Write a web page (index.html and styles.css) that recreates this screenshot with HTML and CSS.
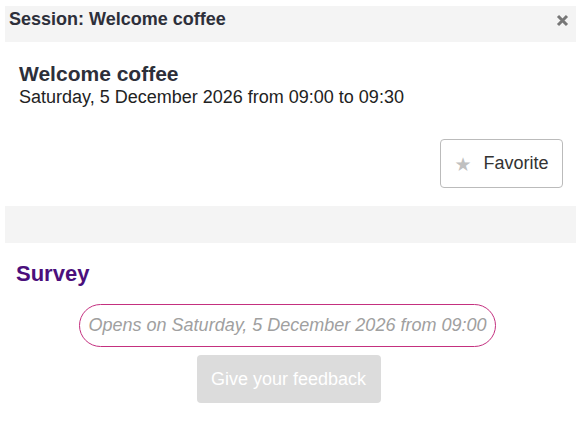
FILE: index.html
```html
<!DOCTYPE html>
<html>
<head>
<meta charset="utf-8">
<link rel="stylesheet" href="styles.css">
</head>
<body>
<div class="dialog">
  <div class="dialog-header">
    <span class="dialog-title">Session: Welcome coffee</span>
    <svg class="close" width="13" height="13" viewBox="0 0 13 13" aria-label="close"><path d="M2 2 L11 11 M11 2 L2 11" stroke="#777" stroke-width="3" stroke-linecap="butt"/></svg>
  </div>
  <div class="session">
    <div class="session-name">Welcome coffee</div>
    <div class="session-time">Saturday, 5 December 2026 from 09:00 to 09:30</div>
  </div>
  <div class="actions">
    <button class="fav-btn"><span class="star">&#9733;</span>Favorite</button>
  </div>
  <div class="band"></div>
  <h2 class="survey-title">Survey</h2>
  <div class="survey">
    <div class="pill">Opens on Saturday, 5 December 2026 from 09:00</div>
    <button class="feedback-btn" disabled>Give your feedback</button>
  </div>
</div>
</body>
</html>
```
FILE: styles.css
```css
html, body {
  margin: 0;
  padding: 0;
  background: #fff;
}
body {
  font-family: "Liberation Sans", Arial, sans-serif;
  color: #333;
}
.dialog {
  padding: 6px 3px 0 5px;
}
.dialog-header {
  background: #f4f4f4;
  height: 36px;
  display: flex;
  justify-content: space-between;
  align-items: flex-start;
  padding: 0 7px 0 4px;
}
.dialog-title {
  font-weight: bold;
  font-size: 18px;
  line-height: 27px;
  color: #2d2f3a;
}
.close {
  margin-top: 8px;
}
.session {
  padding: 20px 14px 0 14px;
}
.session-name {
  font-weight: bold;
  font-size: 21px;
  line-height: 24px;
  color: #2d2f3a;
}
.session-time {
  font-size: 18px;
  line-height: 22px;
  color: #222;
}
.actions {
  display: flex;
  justify-content: flex-end;
  padding: 31px 13px 18px 0;
}
.fav-btn {
  height: 49px;
  width: 123px;
  background: #fff;
  border: 1px solid #bbb;
  border-radius: 4px;
  font-family: "Liberation Sans", Arial, sans-serif;
  font-size: 18px;
  color: #333;
  display: flex;
  align-items: center;
  justify-content: center;
  gap: 12px;
  padding: 0;
}
.star {
  color: #c0c0c0;
  font-size: 19px;
  font-family: "DejaVu Sans", sans-serif;
}
.band {
  background: #f4f4f4;
  height: 37px;
}
.survey-title {
  margin: 0;
  padding: 18px 0 0 11px;
  font-size: 22px;
  line-height: 25px;
  color: #4b0f7c;
  font-weight: bold;
}
.survey {
  display: flex;
  flex-direction: column;
  align-items: center;
  padding: 18px 4px 0 0;
}
.pill {
  border: 1.5px solid #c4307f;
  border-radius: 22px;
  padding: 0 9px;
  height: 41px;
  line-height: 41px;
  font-style: italic;
  font-size: 18px;
  color: #a0a0a0;
  margin-right: 2px;
}
.feedback-btn {
  margin-top: 8px;
  height: 48px;
  width: 184px;
  background: #dcdcdc;
  border: none;
  border-radius: 4px;
  color: #fff;
  font-family: "Liberation Sans", Arial, sans-serif;
  font-size: 18px;
  padding: 0;
}
```
